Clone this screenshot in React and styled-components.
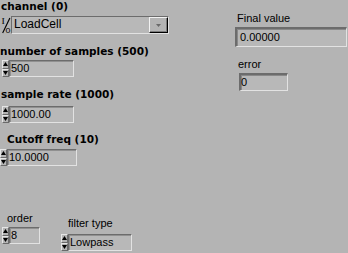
import styled, { createGlobalStyle } from 'styled-components'

const GlobalStyle = createGlobalStyle`
  html, body {
    margin: 0;
    padding: 0;
    background: #b4b4b4;
  }
`

const Panel = styled.div`
  width: 348px;
  height: 253px;
  overflow: hidden;
  display: flex;
  background: #b4b4b4;
  font-family: 'Liberation Sans', Arial, sans-serif;
  font-size: 11px;
  color: #000;
`

const LeftColumn = styled.div`
  width: 235px;
  display: flex;
  flex-direction: column;
  align-items: flex-start;
`

const RightColumn = styled.div`
  flex: 1;
  display: flex;
  flex-direction: column;
  align-items: flex-start;
`

const Label = styled.div`
  font-family: ${(p) =>
    p.$bold ? "'DejaVu Sans', Verdana, sans-serif" : "'Liberation Sans', Arial, sans-serif"};
  font-weight: ${(p) => (p.$bold ? 700 : 400)};
  font-size: ${(p) => (p.$bold ? '10.5px' : '11px')};
  line-height: 13px;
  height: 13px;
  white-space: nowrap;
  margin-top: ${(p) => p.$top || 0}px;
  padding-left: ${(p) => p.$indent || 0}px;
`

const ControlRow = styled.div`
  display: flex;
  align-items: stretch;
  height: ${(p) => p.$height || 17}px;
  margin-top: ${(p) => p.$top || 0}px;
  margin-left: ${(p) => p.$left || 0}px;
`

const Spinner = styled.div`
  width: 7px;
  display: flex;
  flex-direction: column;
`

const StepButton = styled.div`
  flex: 1;
  box-sizing: border-box;
  border-style: solid;
  border-width: 1px;
  border-color: #e6e6e6 #6a6a6a #6a6a6a #e6e6e6;
  display: flex;
  align-items: center;
  justify-content: center;

  svg {
    display: block;
  }
`

const Field = styled.div`
  box-sizing: border-box;
  width: ${(p) => p.$width}px;
  height: 100%;
  background: #b8b8b8;
  border-style: solid;
  border-width: ${(p) => (p.$thick ? '2px 1px 1px 2px' : '1px')};
  border-color: #6c6c6c #e2e2e2 #e2e2e2 #6c6c6c;
  box-shadow: inset 1px 1px 0 ${(p) => (p.$thick ? '#888' : '#909090')};
  padding-left: ${(p) => p.$pad ?? 1}px;
  line-height: ${(p) => p.$lh || 14}px;
  white-space: nowrap;
  overflow: hidden;
`

const RingBox = styled.div`
  box-sizing: border-box;
  width: ${(p) => p.$width}px;
  height: 100%;
  display: flex;
  background: #b8b8b8;
  border: 1px solid;
  border-color: #6c6c6c #e2e2e2 #e2e2e2 #6c6c6c;
`

const RingText = styled.div`
  flex: 1;
  padding-left: 2px;
  line-height: 15px;
  font-size: 12px;
  white-space: nowrap;
`

const DropButton = styled.div`
  width: 19px;
  box-sizing: border-box;
  border-style: solid;
  border-width: 1px;
  border-color: #f2f2f2 #000 #000 #f2f2f2;
  box-shadow: inset -1px -1px 0 #7c7c7c;
  background: #b4b4b4;
  display: flex;
  align-items: center;
  justify-content: center;
`

const ChannelIcon = styled.svg`
  width: 10px;
  height: 18px;
  display: block;
`

const BottomRow = styled.div`
  display: flex;
  align-items: flex-start;
  margin-top: ${(p) => p.$top || 0}px;
  margin-left: 2px;
  gap: 21px;
`

const Group = styled.div`
  display: flex;
  flex-direction: column;
  align-items: flex-start;
  margin-top: ${(p) => p.$top || 0}px;
`

const Arrow = ({ down }) => (
  <svg width="5" height="4" viewBox="0 0 5 4">
    <polygon points={down ? '0,0 5,0 2.5,4' : '2.5,0 5,4 0,4'} fill="#000" />
  </svg>
)

const Stepper = () => (
  <Spinner>
    <StepButton>
      <Arrow />
    </StepButton>
    <StepButton>
      <Arrow down />
    </StepButton>
  </Spinner>
)

const Numeric = ({ value, width, top, left, height }) => (
  <ControlRow $top={top} $left={left} $height={height}>
    <Stepper />
    <Field $width={width}>{value}</Field>
  </ControlRow>
)

const App = () => {
  return (
    <>
      <GlobalStyle />
      <Panel>
        <LeftColumn>
          <Label $bold $indent={1}>
            channel (0)
          </Label>
          <ControlRow $top={3} $left={1} $height={18}>
            <ChannelIcon viewBox="0 0 9 18" preserveAspectRatio="none">
              <text x="0.5" y="8" fontSize="9" fontFamily="'Liberation Serif', serif">
                I
              </text>
              <line x1="8" y1="2" x2="1.5" y2="17" stroke="#000" strokeWidth="1" />
              <text x="4" y="17" fontSize="8" fontFamily="'Liberation Sans', sans-serif">
                0
              </text>
            </ChannelIcon>
            <RingBox $width={158}>
              <RingText>LoadCell</RingText>
              <DropButton>
                <svg width="5" height="3" viewBox="0 0 5 3">
                  <polygon points="0,0 5,0 2.5,3" fill="#6a6a6a" />
                </svg>
              </DropButton>
            </RingBox>
          </ControlRow>

          <Label $bold $top={11}>
            number of samples (500)
          </Label>
          <Numeric value="500" width={65} top={2} left={2} />

          <Label $bold $indent={1} $top={11}>
            sample rate (1000)
          </Label>
          <Numeric value="1000.00" width={65} top={5} left={2} />

          <Label $bold $indent={7} $top={10}>
            Cutoff freq (10)
          </Label>
          <Numeric value="10.0000" width={70} top={3} left={0} />

          <BottomRow $top={46}>
            <Group>
              <Label $indent={5}>order</Label>
              <Numeric value="8" width={31} top={2} />
            </Group>
            <Group $top={5}>
              <Label $indent={7}>filter type</Label>
              <Numeric value="Lowpass" width={64} top={4} />
            </Group>
          </BottomRow>
        </LeftColumn>

        <RightColumn>
          <Label $indent={2} $top={12}>
            Final value
          </Label>
          <ControlRow $top={2} $height={20}>
            <Field $width={112} $thick $pad={3} $lh={16}>
              0.00000
            </Field>
          </ControlRow>
          <Label $indent={3} $top={11}>
            error
          </Label>
          <ControlRow $top={2} $left={4} $height={18}>
            <Field $width={49} $thick $pad={0} $lh={15}>
              0
            </Field>
          </ControlRow>
        </RightColumn>
      </Panel>
    </>
  )
}

export default App
